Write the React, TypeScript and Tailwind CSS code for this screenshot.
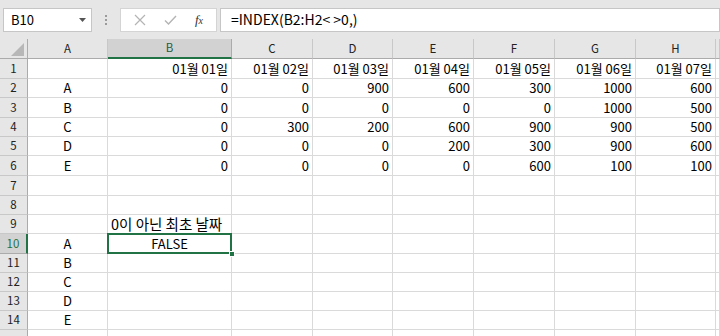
import React from 'react';

const cols = ['A', 'B', 'C', 'D', 'E', 'F', 'G', 'H', ''];

const dates = ['01월 01일', '01월 02일', '01월 03일', '01월 04일', '01월 05일', '01월 06일', '01월 07일'];

const data: Array<[string, number[]]> = [
  ['A', [0, 0, 900, 600, 300, 1000, 600]],
  ['B', [0, 0, 0, 0, 0, 1000, 500]],
  ['C', [0, 300, 200, 600, 900, 900, 500]],
  ['D', [0, 0, 0, 200, 300, 900, 600]],
  ['E', [0, 0, 0, 0, 600, 100, 100]],
];

const font = { fontFamily: '"Noto Sans CJK KR", "Noto Sans", sans-serif' };

function HeaderCell({ label, selected }: { label: string; selected?: boolean }) {
  return (
    <div
      className={
        selected
          ? 'flex items-center justify-center bg-[#d2d2d2] border-r border-[#ababab] border-b-2 border-b-[#217346] text-[11.5px] text-[#1e5c38]'
          : 'flex items-center justify-center bg-[#e6e6e6] border-r border-[#c8c8c8] border-b border-b-[#ababab] text-[11.5px] text-[#222]'
      }
    >
      {label}
    </div>
  );
}

function RowHeader({ n, selected }: { n?: number; selected?: boolean }) {
  return (
    <div
      className={
        selected
          ? 'flex items-center justify-center bg-[#d2d2d2] border-r-2 border-[#217346] border-b border-b-[#ababab] text-[11.5px] text-[#217346]'
          : 'flex items-center justify-center bg-[#e6e6e6] border-r border-[#ababab] border-b border-b-[#c8c8c8] text-[11.5px] text-[#222]'
      }
    >
      {n}
    </div>
  );
}

function Cell({ children, align = 'right' }: { children?: React.ReactNode; align?: 'left' | 'right' | 'center' }) {
  const a = align === 'right' ? 'justify-end pr-[3px]' : align === 'center' ? 'justify-center' : 'justify-start pl-[3px]';
  return (
    <div className={`flex items-center whitespace-nowrap overflow-visible border-r border-b border-[#dadada] text-[13px] text-black bg-white ${a}`}>
      {children}
    </div>
  );
}

export default function App() {
  const rows: React.ReactNode[] = [];

  // row 1: dates
  rows.push(<RowHeader key="h1" n={1} />);
  rows.push(<Cell key="a1" />);
  dates.forEach((d, i) => rows.push(<Cell key={`d${i}`}>{d}</Cell>));
  rows.push(<Cell key="i1" />);

  data.forEach(([name, vals], r) => {
    rows.push(<RowHeader key={`h${r + 2}`} n={r + 2} />);
    rows.push(<Cell key={`n${r}`} align="center">{name}</Cell>);
    vals.forEach((v, i) => rows.push(<Cell key={`v${r}-${i}`}>{v}</Cell>));
    rows.push(<Cell key={`i${r + 2}`} />);
  });

  for (let n = 7; n <= 15; n++) {
    rows.push(<RowHeader key={`h${n}`} n={n < 15 ? n : undefined} selected={n === 10} />);
    const labelA = n >= 10 && n <= 14 ? ['A', 'B', 'C', 'D', 'E'][n - 10] : '';
    rows.push(<Cell key={`a${n}`} align="center">{labelA}</Cell>);
    if (n === 9) {
      rows.push(
        <Cell key="b9" align="left">
          <span className="text-[14.5px]">0이 아닌 최초 날짜</span>
        </Cell>
      );
    } else if (n === 10) {
      rows.push(
        <div key="b10" className="relative flex items-center justify-center border-r border-b border-[#dadada] text-[13px] text-black bg-white">
          FALSE
          <div className="absolute left-[-1px] top-[-1px] right-[-1px] bottom-[-1px] border-2 border-[#217346]" />
          <div className="absolute right-[-4px] bottom-[-4px] w-[6px] h-[6px] bg-[#217346] border border-white" />
        </div>
      );
    } else {
      rows.push(<Cell key={`b${n}`} />);
    }
    for (let c = 0; c < 7; c++) rows.push(<Cell key={`e${n}-${c}`} />);
  }

  return (
    <div className="w-[720px] h-[336px] overflow-hidden bg-white" style={font}>
      {/* formula bar */}
      <div className="h-[39px] bg-[#e6e6e6] flex items-center pl-[3px]">
        <div className="w-[89px] h-[24px] bg-white border border-[#c6c6c6] flex items-center justify-between pl-[7px] pr-[5px]">
          <span className="text-[13px] text-black">B10</span>
          <svg width="7" height="4" viewBox="0 0 7 4">
            <path d="M0 0 L7 0 L3.5 4 Z" fill="#555" />
          </svg>
        </div>
        <div className="w-[28px] flex flex-col items-center gap-[2px]">
          <span className="w-[2px] h-[2px] bg-[#9a9a9a]" />
          <span className="w-[2px] h-[2px] bg-[#9a9a9a]" />
          <span className="w-[2px] h-[2px] bg-[#9a9a9a]" />
        </div>
        <div className="w-[97px] h-[24px] bg-white border border-[#d4d4d4] flex items-center justify-around px-[4px]">
          <svg width="12" height="12" viewBox="0 0 12 12">
            <path d="M1 1 L11 11 M11 1 L1 11" stroke="#b4b4b4" strokeWidth="1.2" />
          </svg>
          <svg width="13" height="12" viewBox="0 0 13 12">
            <path d="M1 6.5 L4.5 10 L12 2" stroke="#b4b4b4" strokeWidth="1.4" fill="none" />
          </svg>
          <span className="text-[13px] italic text-[#333]" style={{ fontFamily: '"Liberation Serif", serif' }}>
            f<span className="text-[10px]">x</span>
          </span>
        </div>
        <div className="ml-[3px] flex-1 h-[24px] bg-white border border-[#c6c6c6] flex items-center pl-[10px]">
          <span className="text-[14px] text-black">=INDEX(B2:H2&lt; &gt;0,)</span>
        </div>
      </div>

      {/* sheet */}
      <div className="grid grid-cols-[28px_80px_124px_81px_80px_81px_81px_81px_80px_1fr] grid-rows-[20px_20px_19px_20px_19px_19px_20px_20px_19px_19px_20px_19px_19px_19px_19px_20px]">
        <div className="bg-[#e6e6e6] border-r border-b border-[#ababab] flex items-end justify-end pr-[3px] pb-[2px]">
          <svg width="13" height="13" viewBox="0 0 13 13">
            <path d="M13 0 L13 13 L0 13 Z" fill="#b7b7b7" />
          </svg>
        </div>
        {cols.map((c, i) => (
          <HeaderCell key={i} label={c} selected={c === 'B'} />
        ))}
        {rows}
      </div>
    </div>
  );
}
